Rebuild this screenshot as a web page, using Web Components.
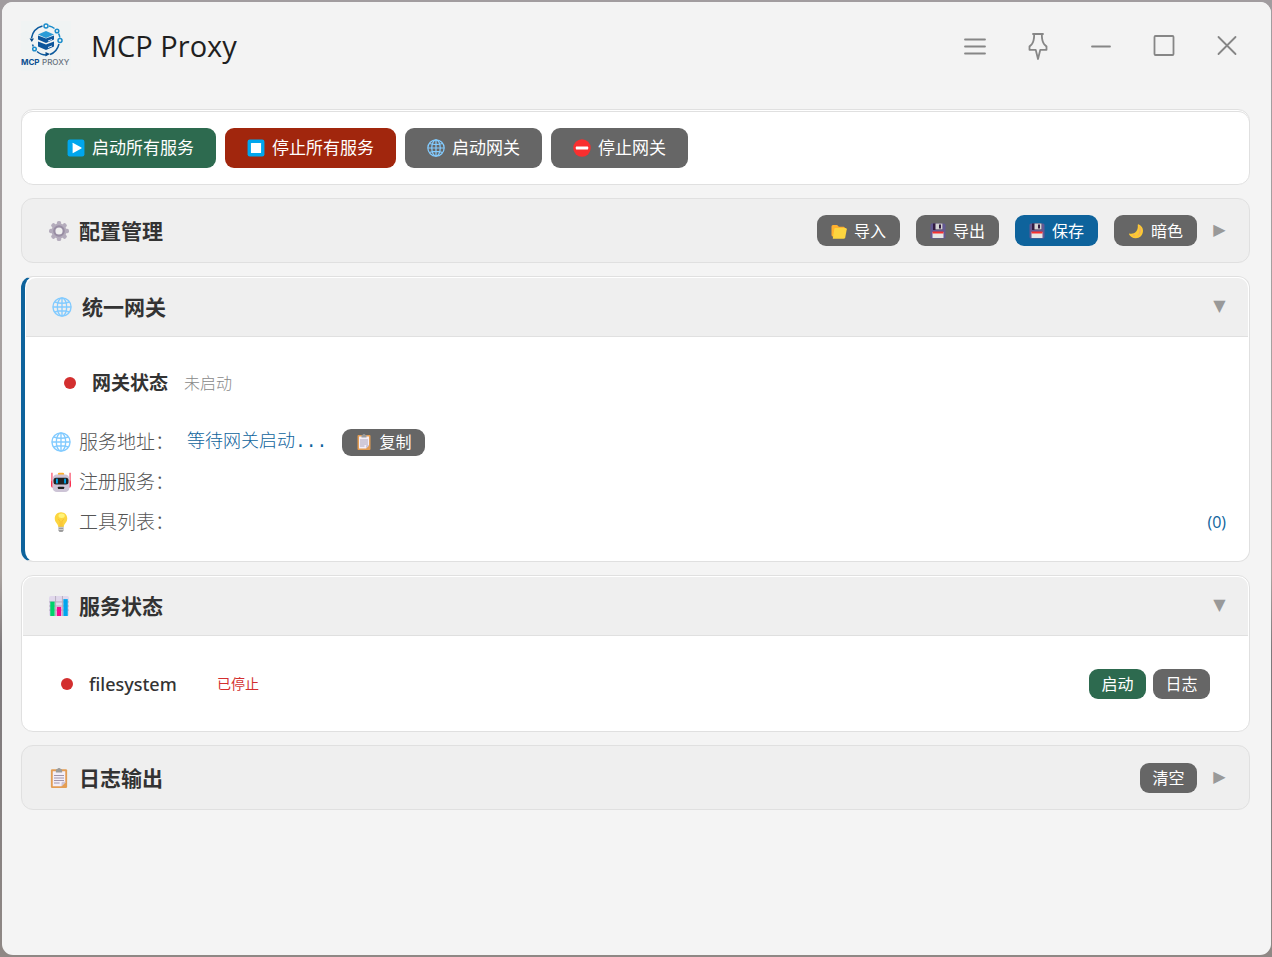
<!DOCTYPE html>
<html lang="zh-CN">
<head>
<meta charset="utf-8">
<title>MCP Proxy</title>
<style>
    body {
        margin: 0;
        box-sizing: border-box;
        min-height: 100vh;
        padding: 2px 1px 2px 2px;
        display: flex;
        background: linear-gradient(#a19c9f 0, #aaa3a0 60%, #7c787b 68%, #8f8885 100%);
        font-family: "Open Sans", "Noto Sans CJK SC", sans-serif;
        color: #333;
        --accent: #0e639c;
        --line: #e0e0e0;
        --muted: #666;
    }
</style>
</head>
<body>
<app-window>
    <title-bar slot="bar">MCP Proxy</title-bar>
    <tool-panel>
        <app-button tone="green" icon="play">启动所有服务</app-button>
        <app-button tone="red" icon="stop">停止所有服务</app-button>
        <app-button icon="globe">启动网关</app-button>
        <app-button icon="noentry">停止网关</app-button>
    </tool-panel>
    <app-section icon="gear" label="配置管理" collapsed>
        <app-button slot="actions" size="small" icon="folder">导入</app-button>
        <app-button slot="actions" size="small" icon="floppy">导出</app-button>
        <app-button slot="actions" size="small" tone="blue" icon="floppy">保存</app-button>
        <app-button slot="actions" size="small" icon="moon">暗色</app-button>
    </app-section>
    <app-section icon="globe" label="统一网关" accent>
        <gateway-status state="未启动">网关状态</gateway-status>
        <info-row icon="globe" label="服务地址：">
            <span class="address">等待网关启动...</span>
            <app-button size="slim" icon="clipboard">复制</app-button>
        </info-row>
        <info-row icon="robot" label="注册服务："></info-row>
        <info-row icon="bulb" label="工具列表："><span slot="end">(0)</span></info-row>
    </app-section>
    <app-section icon="chart" label="服务状态">
        <service-item name="filesystem" state="已停止">
            <app-button size="mini" tone="green">启动</app-button>
            <app-button size="mini">日志</app-button>
        </service-item>
    </app-section>
    <app-section icon="clipboard" label="日志输出" collapsed>
        <app-button slot="actions" size="mini">清空</app-button>
    </app-section>
</app-window>

<script>
// small helper, every element gets an open root
function attach(el, html) {
    const template = document.createElement("template");
    template.innerHTML = html;
    el.attachShadow({mode: "open"}).appendChild(template.content.cloneNode(true));
}

const icons = {
    play: `<rect x="1" y="1" width="30" height="30" rx="4" fill="#00a6ed"/><path d="M10 7.500v17q0 1 1 .5l14.500-8q1-1 0-1.800l-14.500-8.200q-1-.5-1 .5z" fill="#fff"/>`,
    stop: `<rect x="1" y="1" width="30" height="30" rx="4" fill="#00a6ed"/><rect x="7" y="7" width="18" height="18" rx="1" fill="#fff"/>`,
    globe: `<g fill="none" stroke="#83cbff" stroke-width="2.2"><circle cx="16" cy="16" r="14.500"/><ellipse cx="16" cy="16" rx="7.500" ry="14.500"/><path d="M16 1.500v29M1.500 16h29M4.500 8q11.500 4 23 0M4.500 24q11.500-4 23 0"/></g>`,
    noentry: `<circle cx="16" cy="16" r="15.500" fill="#f92f2f"/><rect x="5" y="13.500" width="22" height="5" rx="1" fill="#fff"/>`,
    gear: `<g fill="#b4acbc"><rect x="12.500" y="0" width="7" height="32" rx="3"/><rect x="12.500" y="0" width="7" height="32" rx="3" transform="rotate(45 16 16)"/><rect x="12.500" y="0" width="7" height="32" rx="3" transform="rotate(90 16 16)"/><rect x="12.500" y="0" width="7" height="32" rx="3" transform="rotate(135 16 16)"/><circle cx="16" cy="16" r="12"/></g><circle cx="16" cy="16" r="7.500" fill="#efefef" stroke="#998ea4" stroke-width="3.500"/>`,
    folder: `<path d="M1 7q0-3 3-3h7q2 0 3.500 2l1 1.500H25q3 0 3 3V27H4q-3 0-3-3z" fill="#ffb02e"/><path d="M8.500 10H29q3 0 2.500 3l-3 15.500q-.6 3-3.500 3H3.500l3-19q.4-2.500 2-2.500z" fill="#fcd53f"/>`,
    floppy: `<path d="M1 4q0-3 3-3h24q3 0 3 3v24q0 3-3 3H4q-3 0-3-3z" fill="#635994"/><path d="M6 1h19v12q0 1-1 1H7q-1 0-1-1z" fill="#321b41"/><path d="M11 1h14v12H11z" fill="#d3d3d3"/><path d="M18 3h4v8h-4z" fill="#321b41"/><path d="M5 18h22v12H5z" fill="#e6e6e6"/><path d="M5 17h22v4H5z" fill="#f8312f"/>`,
    moon: `<path d="M21 2.500q9 4 9 13c0 9-6.500 15-14.500 15-6.500 0-11.500-3.500-13.500-8q-.5-1.500 1-1.500c9 2 18-4 16.500-17q0-1.700 1.500-1.500z" fill="#fcc934"/><path d="M22 5c7 7 4.500 18-4 21 6-7 6-14 4-21z" fill="#f3ad61"/><circle cx="12" cy="25" r="2" fill="#f3ad61"/>`,
    clipboard: `<rect x="3" y="2" width="26" height="30" rx="2" fill="#e39d54"/><path d="M6 5h20v18l-6 6H6z" fill="#f3eef8"/><path d="M26 22v1l-6 6v-5q0-2 2-2z" fill="#cdc4d6"/><path d="M11 7V3q0-1 1-1h1q1-2 3-2t3 2h1q1 0 1 1v4z" fill="#9b9b9b"/><path d="M8 12h16M8 16h16M8 20h16M8 24h9" stroke="#998ea4" stroke-width="1.500"/>`,
    robot: `<path d="M1.500 1v19M30.500 1v19" stroke="#f92f4f" stroke-width="1.700"/><path d="M2 13Q0 13 0 17v5q0 3 3 3zM30 13q2 0 2 4v5q0 3-3 3z" fill="#f92f4f"/><rect x="11" y="1" width="10" height="5" rx="2" fill="#ffb02e"/><rect x="2.500" y="4" width="27" height="28" rx="7" fill="#cdc4d6"/><rect x="4" y="9" width="24" height="11" rx="4" fill="#212121"/><path d="M9.500 12v5M22.500 12v5" stroke="#00a6ed" stroke-width="3" stroke-linecap="round"/><rect x="11" y="23.500" width="10" height="3.500" rx="1" fill="#212121"/>`,
    bulb: `<path d="M12 22h8v7q0 3-4 3t-4-3z" fill="#9b9b9b"/><path d="M11.500 24.500h9M12 28h8" stroke="#d3d3d3" stroke-width="1.500"/><path d="M16 .500c6 0 10 4.500 10 10 0 6-5 8-5.500 13H11.500C11 18.500 6 16.500 6 10.500 6 5 10 .500 16 .500z" fill="#fcd53f"/><path d="M14.500 23V15l-3-4M17.500 23V15l3-4" fill="none" stroke="#f9b02e" stroke-width="1"/><ellipse cx="17" cy="6" rx="5" ry="3.500" fill="#fff478"/>`,
    chart: `<rect width="32" height="32" rx="3" fill="#e1d8ec"/><path d="M0 9.500h32M0 16h32M0 22.500h32M10.500 0v32M21.500 0v32" stroke="#b4acbc" stroke-width="1.500"/><path d="M2 9h7v23H2z" fill="#00d26a"/><path d="M12.500 17.500h7V32h-7z" fill="#f70a8d"/><path d="M23 5h7v27h-7z" fill="#00a6ed"/>`
};

// ui-icon
class UiIcon extends HTMLElement {
    constructor() {
        super();
        attach(this, /*html*/`
            <style>
                :host {
                    display: block;
                    width: 20px;
                    height: 20px;
                    flex: none;
                }
                svg {
                    display: block;
                    width: 100%;
                    height: 100%;
                }
            </style>
            <svg viewBox="0 0 32 32" aria-hidden="true">${icons[this.getAttribute("name")] || ""}</svg>
        `);
    }
}
window.customElements.define("ui-icon", UiIcon);

// app-button
class AppButton extends HTMLElement {
    constructor() {
        super();
        const icon = this.getAttribute("icon");
        attach(this, /*html*/`
            <style>
                :host {
                    display: block;
                    flex: none;
                    --bg: #666;
                }
                :host([tone="green"]) { --bg: #2d6a4f; }
                :host([tone="red"]) { --bg: #a1260d; }
                :host([tone="blue"]) { --bg: var(--accent); }
                button {
                    display: flex;
                    align-items: center;
                    justify-content: center;
                    gap: 7px;
                    height: 40px;
                    padding: 0 22px;
                    border: 0;
                    border-radius: 9px;
                    background: var(--bg);
                    color: #fff;
                    font: inherit;
                    font-size: 17px;
                    line-height: 24px;
                    cursor: pointer;
                }
                button:hover { filter: brightness(1.1); }
                ui-icon {
                    width: 18px;
                    height: 18px;
                }
                :host([size]) button {
                    height: 31px;
                    padding: 0 14px;
                    font-size: 16px;
                }
                :host([size]) ui-icon {
                    width: 16px;
                    height: 16px;
                }
                :host([size="slim"]) button { height: 27px; }
                :host([size="mini"]) button {
                    min-width: 57px;
                    height: 30px;
                    padding: 0 12px;
                }
            </style>
            <button type="button">${icon ? `<ui-icon name="${icon}"></ui-icon>` : ""}<slot></slot></button>
        `);
    }
}
window.customElements.define("app-button", AppButton);

// app-logo
class AppLogo extends HTMLElement {
    constructor() {
        super();
        attach(this, /*html*/`
            <style>
                :host {
                    display: block;
                    width: 50px;
                    height: 50px;
                    background: #f0f3f3;
                }
                svg { display: block; }
                text {
                    font-family: Inter, sans-serif;
                    font-size: 8px;
                    font-weight: 700;
                }
                .light { font-weight: 500; }
            </style>
            <svg width="50" height="50" viewBox="0 0 50 50" role="img" aria-label="MCP PROXY logo">
                <g fill="none" stroke="#0c5a9e" stroke-width="1.500">
                    <path d="M21.500 5A15 15 0 0 0 10.500 17"/>
                    <path d="M11.500 23.500l.8 2"/>
                    <path d="M16 30.500Q20 34 25 34"/>
                    <path d="M29 33.500Q36 31 38 23"/>
                </g>
                <g fill="none" stroke="#1a8ccb" stroke-width="1.500">
                    <path d="M28 5q3 .5 5.500 2.500M37.500 12.500q1 1.500 1.300 4"/>
                    <circle cx="25" cy="5" r="2"/>
                    <circle cx="36" cy="10" r="1.800"/>
                    <circle cx="39" cy="19.500" r="2"/>
                    <circle cx="13.500" cy="28" r="1.800"/>
                </g>
                <path d="M8.500 17.500l2.300 3.500L13 17.500zM24.500 31l4.500 2-4.500 2.500z" fill="#084b8a"/>
                <path d="M17 13.500l8-3.500 8 3.500-8 3.500z" fill="#2a9bd7"/>
                <path d="M17 14.500l8 3 8-3v4l-8 3.500-8-3.500z" fill="#0c559c"/>
                <path d="M17 20.500l8 3 8-3v5l-8 3.500-8-3.500z" fill="#0c559c"/>
                <path d="M27 20l4-1.500M27 26.500l4-1.500" stroke="#fff" stroke-width=".9"/>
                <text x="0" y="44" fill="#0b4f91">MCP</text>
                <text class="light" x="21" y="44" fill="#67727d">PROXY</text>
            </svg>
        `);
    }
}
window.customElements.define("app-logo", AppLogo);

// title-bar
class TitleBar extends HTMLElement {
    constructor() {
        super();
        attach(this, /*html*/`
            <style>
                :host {
                    display: flex;
                    align-items: center;
                    height: 88px;
                    padding: 0 13px 0 19px;
                    background: #f3f3f3;
                }
                h1 {
                    flex: 1;
                    margin: 0 0 0 20px;
                    font-size: 29px;
                    line-height: 40px;
                    font-weight: 400;
                    color: #1f1f1f;
                }
                button {
                    width: 63px;
                    height: 48px;
                    padding: 0;
                    border: 0;
                    background: none;
                    display: grid;
                    place-items: center;
                }
                svg {
                    fill: none;
                    stroke: #868686;
                    stroke-width: 1.8;
                    stroke-linecap: round;
                    stroke-linejoin: round;
                }
            </style>
            <app-logo></app-logo>
            <h1><slot></slot></h1>
            <button type="button" aria-label="菜单"><svg width="28" height="28"><path d="M4 7.500h20M4 14.500h20M4 21.500h20"/></svg></button>
            <button type="button" aria-label="置顶"><svg width="28" height="28"><path d="M9 2h10M10.200 2q0 7.500-2.500 10.300L5.500 14.500v3.300h6.200L14 27l2.300-9.200h6.200V14.500l-2.200-2.200Q17.800 9.500 17.800 2"/></svg></button>
            <button type="button" aria-label="最小化"><svg width="28" height="28"><path d="M5 14.500h18"/></svg></button>
            <button type="button" aria-label="最大化"><svg width="28" height="28"><rect x="4.500" y="4" width="19" height="19" rx="1"/></svg></button>
            <button type="button" aria-label="关闭"><svg width="28" height="28"><path d="M5.500 5l17 17M22.500 5l-17 17"/></svg></button>
        `);
    }
}
window.customElements.define("title-bar", TitleBar);

// tool-panel
class ToolPanel extends HTMLElement {
    constructor() {
        super();
        attach(this, /*html*/`
            <style>
                :host {
                    display: flex;
                    flex-wrap: wrap;
                    gap: 9px;
                    padding: 18px 23px 16px;
                    border: 1px solid var(--line);
                    border-radius: 12px;
                    background: #fff;
                    box-shadow: inset 0 1px #fff, inset 0 2px var(--line);
                }
            </style>
            <slot></slot>
        `);
    }
}
window.customElements.define("tool-panel", ToolPanel);

// app-section
class AppSection extends HTMLElement {
    constructor() {
        super();
        const collapsed = this.hasAttribute("collapsed");
        attach(this, /*html*/`
            <style>
                :host {
                    display: block;
                    padding: 1px;
                    border: 1px solid var(--line);
                    border-radius: 12px;
                    background: #fff;
                }
                :host([accent]) { border-left: 4px solid var(--accent); }
                :host([collapsed]) { background: #efefef; }
                header {
                    box-sizing: border-box;
                    display: flex;
                    align-items: center;
                    gap: 16px;
                    height: 59px;
                    padding: 0 22px 0 26px;
                    border-bottom: 1px solid var(--line);
                    border-radius: 10px 10px 0 0;
                    background: #efefef;
                }
                :host([collapsed]) header {
                    height: 61px;
                    border: 0;
                    border-radius: 10px;
                }
                h2 {
                    flex: 1;
                    display: flex;
                    align-items: center;
                    gap: 10px;
                    margin: 0;
                    font-size: 21px;
                    line-height: 30px;
                    font-weight: 700;
                }
                .toggle {
                    width: 13px;
                    border: 0;
                    padding: 0 0 2px;
                    background: none;
                    color: #999;
                    font-family: "DejaVu Sans", sans-serif;
                    font-size: 16px;
                    line-height: 20px;
                }
            </style>
            <header>
                <h2><ui-icon name="${this.getAttribute("icon")}"></ui-icon>${this.getAttribute("label")}</h2>
                <slot name="actions"></slot>
                <button class="toggle" type="button" aria-expanded="${!collapsed}">${collapsed ? "▶" : "▼"}</button>
            </header>
            <slot></slot>
        `);
    }
}
window.customElements.define("app-section", AppSection);

// status-dot
class StatusDot extends HTMLElement {
    constructor() {
        super();
        attach(this, /*html*/`
            <style>
                :host {
                    display: block;
                    flex: none;
                    width: 12px;
                    height: 12px;
                    border-radius: 50%;
                    background: #d32f2f;
                }
            </style>
        `);
    }
}
window.customElements.define("status-dot", StatusDot);

// gateway-status
class GatewayStatus extends HTMLElement {
    constructor() {
        super();
        attach(this, /*html*/`
            <style>
                :host {
                    display: flex;
                    align-items: center;
                    gap: 16px;
                    height: 52px;
                    margin: 20px 0 13px;
                    padding: 0 38px;
                }
                strong { font-size: 19px; line-height: 28px; }
                span {
                    font-size: 16px;
                    line-height: 24px;
                    font-weight: 300;
                    color: #888;
                }
            </style>
            <status-dot></status-dot>
            <strong><slot></slot></strong>
            <span>${this.getAttribute("state")}</span>
        `);
    }
}
window.customElements.define("gateway-status", GatewayStatus);

// info-row
class InfoRow extends HTMLElement {
    constructor() {
        super();
        attach(this, /*html*/`
            <style>
                :host {
                    display: flex;
                    align-items: center;
                    height: 40px;
                    padding: 0 22px 0 25px;
                    font-size: 16px;
                    line-height: 24px;
                    color: var(--accent);
                }
                :host(:last-child) { margin-bottom: 18px; }
                .label {
                    margin: 0 13px 0 8px;
                    font-size: 19px;
                    line-height: 28px;
                    font-weight: 300;
                    color: #555;
                }
                .value {
                    flex: 1;
                    display: flex;
                    align-items: center;
                    gap: 15px;
                }
                ::slotted(.address) {
                    font-family: "Liberation Mono", "Noto Sans CJK SC", monospace;
                    font-size: 18px;
                    font-weight: 300;
                }
            </style>
            <ui-icon name="${this.getAttribute("icon")}"></ui-icon>
            <span class="label">${this.getAttribute("label")}</span>
            <div class="value"><slot></slot></div>
            <slot name="end"></slot>
        `);
    }
}
window.customElements.define("info-row", InfoRow);

// service-item
class ServiceItem extends HTMLElement {
    constructor() {
        super();
        attach(this, /*html*/`
            <style>
                :host {
                    display: flex;
                    align-items: center;
                    gap: 7px;
                    padding: 33px 38px 31px;
                }
                .name {
                    min-width: 112px;
                    margin: 0 9px;
                    font-family: "Noto Sans", "Open Sans", sans-serif;
                    font-size: 18px;
                    line-height: 26px;
                    font-weight: 500;
                }
                .state {
                    flex: 1;
                    font-size: 14px;
                    line-height: 20px;
                    color: #d32f2f;
                }
            </style>
            <status-dot></status-dot>
            <span class="name">${this.getAttribute("name")}</span>
            <span class="state">${this.getAttribute("state")}</span>
            <slot></slot>
        `);
    }
}
window.customElements.define("service-item", ServiceItem);

// app-window
class AppWindow extends HTMLElement {
    constructor() {
        super();
        attach(this, /*html*/`
            <style>
                :host {
                    display: block;
                    flex: 1;
                    overflow: hidden;
                    border-radius: 11px;
                    background: #f4f4f4;
                }
                main {
                    display: flex;
                    flex-direction: column;
                    gap: 13px;
                    padding: 19px 21px 19px 19px;
                }
            </style>
            <slot name="bar"></slot>
            <main><slot></slot></main>
        `);
    }
}
window.customElements.define("app-window", AppWindow);
</script>
</body>
</html>
